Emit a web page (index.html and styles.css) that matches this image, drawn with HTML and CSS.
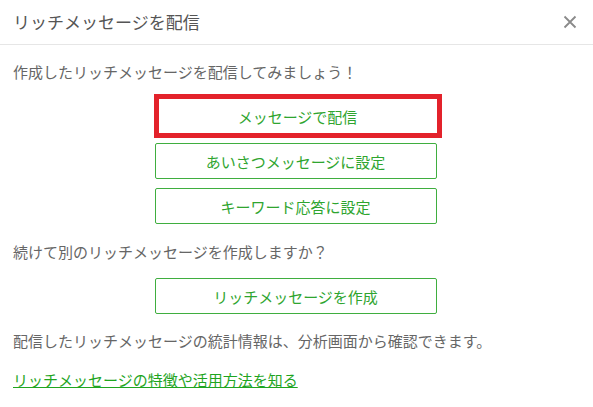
FILE: index.html
```html
<!DOCTYPE html>
<html lang="ja">
<head>
<meta charset="utf-8">
<link rel="stylesheet" href="styles.css">
</head>
<body>
<div class="modal">
  <div class="modal-header">
    <span class="modal-title">リッチメッセージを配信</span>
    <span class="close" aria-label="close">
      <svg width="14" height="14" viewBox="0 0 14 14"><path d="M1.5 1.5 L12.5 12.5 M12.5 1.5 L1.5 12.5" stroke="#8a8a8a" stroke-width="1.8" fill="none"/></svg>
    </span>
  </div>
  <div class="modal-body">
    <p class="text t1">作成したリッチメッセージを配信してみましょう！</p>
    <div class="btn-group">
      <div class="btn highlighted">メッセージで配信</div>
      <div class="btn">あいさつメッセージに設定</div>
      <div class="btn">キーワード応答に設定</div>
    </div>
    <p class="text t2">続けて別のリッチメッセージを作成しますか？</p>
    <div class="btn-group single">
      <div class="btn">リッチメッセージを作成</div>
    </div>
    <p class="text t3">配信したリッチメッセージの統計情報は、分析画面から確認できます。</p>
    <p class="text t4"><a class="link" href="#">リッチメッセージの特徴や活用方法を知る</a></p>
  </div>
</div>
</body>
</html>
```
FILE: styles.css
```css
* { box-sizing: border-box; }
html, body { margin: 0; padding: 0; background: #fff; }
body {
  font-family: "Noto Sans CJK JP", "Noto Sans", sans-serif;
  color: #666;
}
.modal { width: 593px; height: 407px; background: #fff; }
.modal-header {
  height: 45px;
  border-bottom: 1px solid #e6e6e6;
  display: flex;
  align-items: center;
  justify-content: space-between;
  padding: 0 16px 0 13px;
}
.modal-title { font-size: 17px; color: #555; line-height: 22px; }
.close { display: flex; width: 14px; height: 14px; }
.modal-body { padding: 16px 15px 0 13px; }
.text { margin: 0; font-size: 15px; line-height: 22px; color: #666; }
.btn-group {
  display: flex;
  flex-direction: column;
  align-items: center;
  gap: 9px;
  margin-top: 15px;
}
.btn {
  width: 282px;
  height: 36px;
  border: 1px solid #3fae3f;
  border-radius: 2px;
  color: #2fa52f;
  font-size: 15px;
  display: flex;
  align-items: center;
  justify-content: center;
  background: #fff;
}
.btn.highlighted {
  width: 288px;
  height: 44px;
  margin: -4px 0 -4px 4px;
  border: 5px solid #e3222b;
  border-radius: 0;
}
.t2 { margin-top: 17px; }
.btn-group.single { margin-top: 15px; }
.t3 { margin-top: 16px; }
.t4 { margin-top: 17px; }
.link { color: #1fa51f; text-decoration: underline; }
```
